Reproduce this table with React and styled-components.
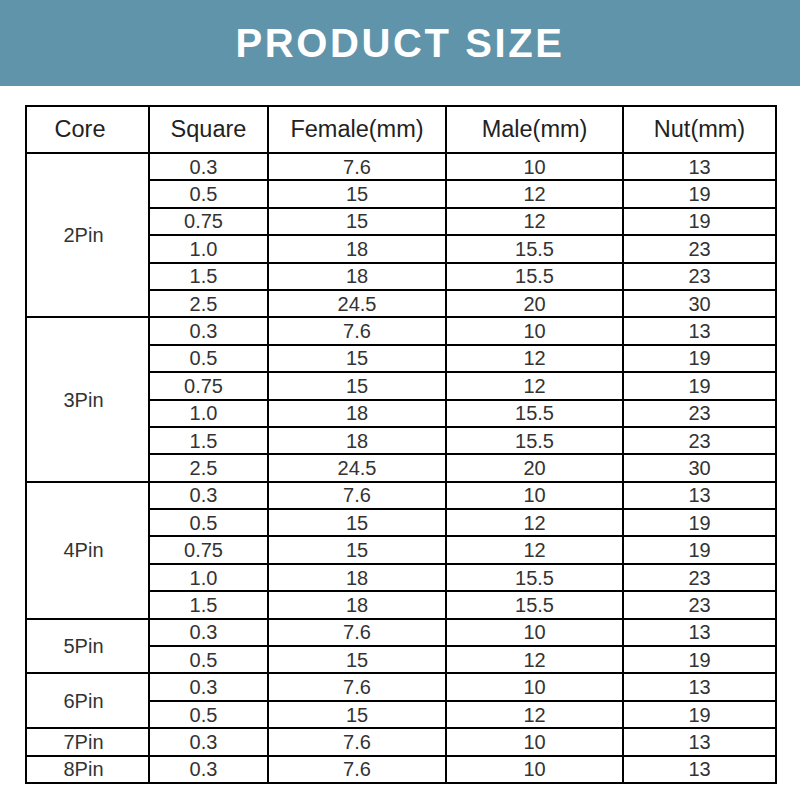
import React from 'react';
import styled, { createGlobalStyle } from 'styled-components';

const GlobalStyle = createGlobalStyle`
  body {
    margin: 0;
    background: #fff;
    font-family: "Liberation Sans", Arial, sans-serif;
  }
`;

const Banner = styled.div`
  height: 86px;
  background: #6094aa;
  display: flex;
  align-items: center;
  justify-content: center;
`;

const Title = styled.h1`
  margin: 0;
  color: #fff;
  font-size: 40px;
  font-weight: bold;
  letter-spacing: 2.6px;
  padding-top: 1px;
`;

const TableWrap = styled.div`
  padding: 19px 25px 0 25px;
`;

const SizeTable = styled.table`
  width: 750px;
  border-collapse: collapse;
  table-layout: fixed;
`;

const HeadRow = styled.tr`
  height: 47px;
`;

const Row = styled.tr`
  height: 27.4px;
`;

// column width counts the cell's right padding, so take it off the content width
const HeadCell = styled.th`
  border: 2px solid #000;
  font-weight: normal;
  font-size: 23.5px;
  color: #222;
  text-align: center;
  padding: 0 ${(p) => p.shift || 0}px 0 0;
  width: ${(p) => p.w - 2 - (p.shift || 0)}px;
`;

const Cell = styled.td`
  border: 2px solid #000;
  font-size: 20px;
  color: #333;
  text-align: center;
  padding: 0 ${(p) => p.shift || 0}px 0 0;
  line-height: 22px;
`;

const CoreCell = styled(Cell)`
  vertical-align: middle;
`;

const columns = [
  { label: 'Core', w: 123, shift: 15 },
  { label: 'Square', w: 119 },
  { label: 'Female(mm)', w: 178 },
  { label: 'Male(mm)', w: 177 },
  { label: 'Nut(mm)', w: 153 },
];

const full = [
  ['0.3', '7.6', '10', '13'],
  ['0.5', '15', '12', '19'],
  ['0.75', '15', '12', '19'],
  ['1.0', '18', '15.5', '23'],
  ['1.5', '18', '15.5', '23'],
  ['2.5', '24.5', '20', '30'],
];

const groups = [
  { core: '2Pin', rows: full },
  { core: '3Pin', rows: full },
  { core: '4Pin', rows: full.slice(0, 5) },
  { core: '5Pin', rows: full.slice(0, 2) },
  { core: '6Pin', rows: full.slice(0, 2) },
  { core: '7Pin', rows: full.slice(0, 1) },
  { core: '8Pin', rows: full.slice(0, 1) },
];

const App = () => {
  return (
    <>
      <GlobalStyle />
      <Banner>
        <Title>PRODUCT SIZE</Title>
      </Banner>
      <TableWrap>
        <SizeTable>
          <thead>
            <HeadRow>
              {columns.map((c) => (
                <HeadCell key={c.label} w={c.w} shift={c.shift}>{c.label}</HeadCell>
              ))}
            </HeadRow>
          </thead>
          <tbody>
            {groups.map((g) =>
              g.rows.map((r, i) => (
                <Row key={g.core + i}>
                  {i === 0 && (
                    <CoreCell rowSpan={g.rows.length} shift={8}>{g.core}</CoreCell>
                  )}
                  {r.map((v, j) => (
                    <Cell key={j} shift={j === 0 ? 10 : 0}>{v}</Cell>
                  ))}
                </Row>
              ))
            )}
          </tbody>
        </SizeTable>
      </TableWrap>
    </>
  );
};

export default App;
